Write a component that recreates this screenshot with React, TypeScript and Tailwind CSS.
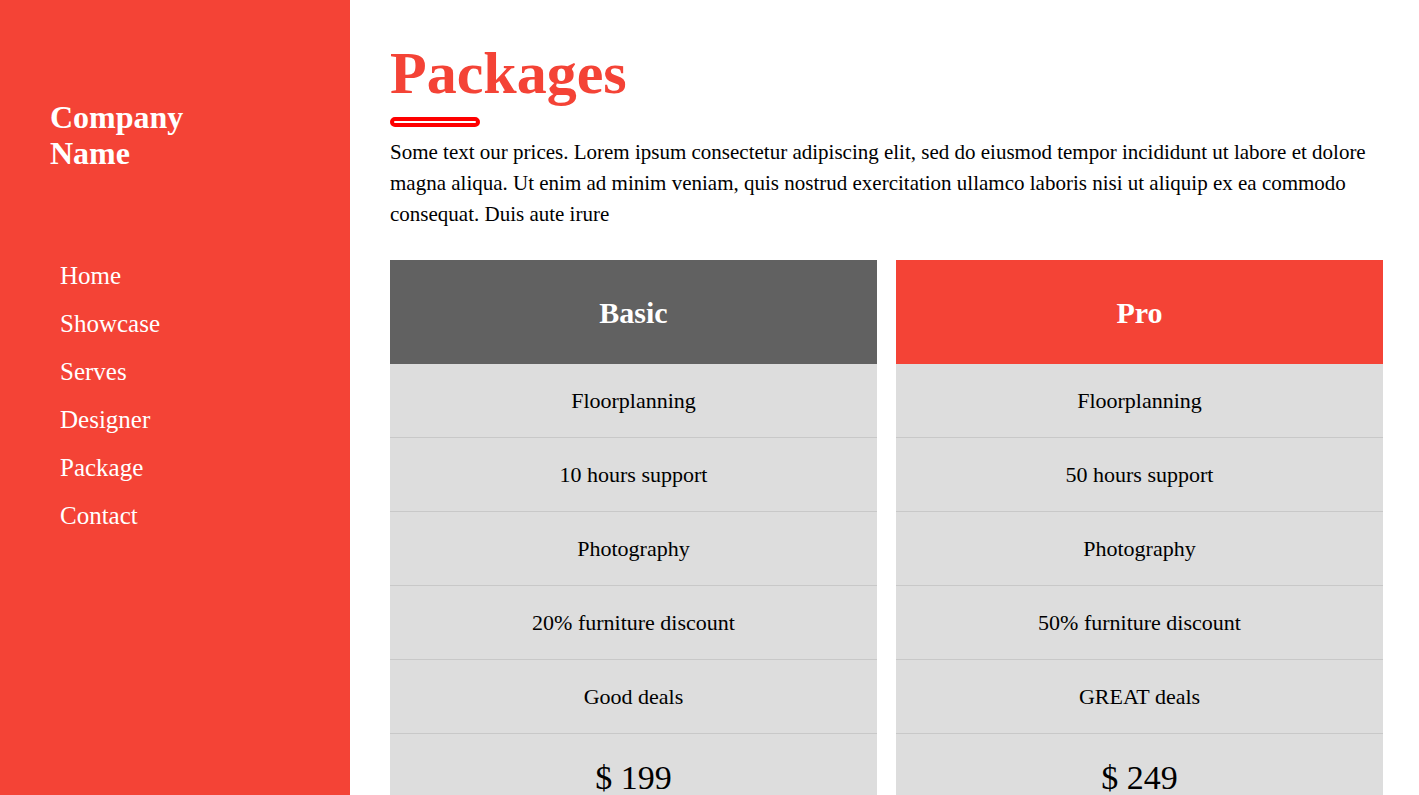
import React from "react";

const serif = { fontFamily: '"Liberation Serif", "Times New Roman", serif' };

type Plan = { name: string; head: string; items: string[]; price: string };

const plans: Plan[] = [
  {
    name: "Basic",
    head: "bg-[#616161]",
    items: ["Floorplanning", "10 hours support", "Photography", "20% furniture discount", "Good deals"],
    price: "$ 199",
  },
  {
    name: "Pro",
    head: "bg-[#f44336]",
    items: ["Floorplanning", "50 hours support", "Photography", "50% furniture discount", "GREAT deals"],
    price: "$ 249",
  },
];

function Card({ plan }: { plan: Plan }) {
  return (
    <div className="flex flex-col bg-[#dddddd]">
      <div className={`${plan.head} h-[104px] flex items-center justify-center text-white font-bold text-[30px]`}>
        {plan.name}
      </div>
      {plan.items.map((it, i) => (
        <div
          key={i}
          className="h-[74px] flex items-center justify-center border-b border-[#c8c8c8] text-[22px] text-black"
        >
          {it}
        </div>
      ))}
      <div className="h-[86px] flex items-center justify-center text-[34px] text-black">{plan.price}</div>
    </div>
  );
}

export default function App() {
  const nav = ["Home", "Showcase", "Serves", "Designer", "Package", "Contact"];
  return (
    <div className="flex h-[795px] w-[1419px] overflow-hidden bg-white" style={serif}>
      <aside className="w-[350px] shrink-0 bg-[#f44336] text-white pt-[99px]">
        <div className="pl-[50px] text-[32px] font-bold leading-[36px]">
          Company
          <br />
          Name
        </div>
        <nav className="mt-[81px] pl-[60px] flex flex-col">
          {nav.map((n) => (
            <span key={n} className="text-[25px] leading-[48px]">
              {n}
            </span>
          ))}
        </nav>
      </aside>
      <main className="flex-1 pl-[40px] pr-[36px] pt-[43px]">
        <h1 className="text-[60px] leading-[60px] font-bold text-[#f44336]">Packages</h1>
        <div className="mt-[14px] w-[90px] h-[10px] border-[4px] border-[#ff0000] rounded-full bg-white" />
        <p className="mt-[10px] text-[21px] leading-[31px] text-black">
          Some text our prices. Lorem ipsum consectetur adipiscing elit, sed do eiusmod tempor incididunt ut labore et
          dolore magna aliqua. Ut enim ad minim veniam, quis nostrud exercitation ullamco laboris nisi ut aliquip ex ea
          commodo consequat. Duis aute irure
        </p>
        <div className="mt-[30px] grid grid-cols-2 gap-[19px]">
          {plans.map((p) => (
            <Card key={p.name} plan={p} />
          ))}
        </div>
      </main>
    </div>
  );
}
